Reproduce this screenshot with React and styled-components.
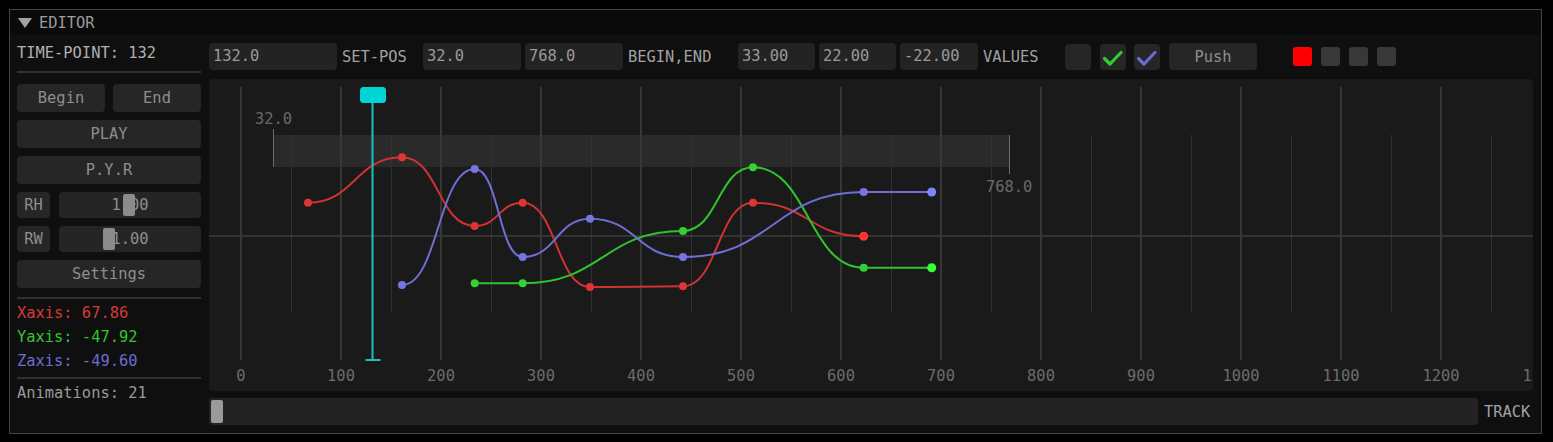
import React from 'react'
import styled, { createGlobalStyle } from 'styled-components'

const GlobalStyle = createGlobalStyle`
  html, body {
    margin: 0;
    padding: 0;
    background: #000;
  }
  body {
    font-family: 'DejaVu Sans Mono', 'Liberation Mono', monospace;
    font-size: 15.4px;
  }
`

const Window = styled.div`
  margin: 9px 0 0 9px;
  width: 1533px;
  height: 425px;
  box-sizing: border-box;
  border: 1px solid #444;
  background: #0f0f0f;
  display: flex;
  flex-direction: column;
`

const TitleBar = styled.div`
  flex: none;
  height: 25px;
  background: #0a0a0a;
  display: flex;
  align-items: center;
  gap: 7px;
  padding-left: 8px;
  color: #9c9c9c;
`

const Arrow = styled.span`
  width: 0;
  height: 0;
  border-left: 7px solid transparent;
  border-right: 7px solid transparent;
  border-top: 10px solid #a2a2a2;
`

const Body = styled.div`
  flex: 1;
  display: flex;
  gap: 8px;
  padding: 0 8px 8px 7px;
`

const LeftPanel = styled.div`
  width: 184px;
  flex: none;
  display: flex;
  flex-direction: column;
  padding-top: 8px;
`

const InfoText = styled.div`
  line-height: ${(p) => p.$lh || 24}px;
  color: ${(p) => p.$color || '#9a9a9a'};
  margin-top: ${(p) => p.$mt || 0}px;
  white-space: nowrap;
`

const Separator = styled.div`
  height: 2px;
  background: #303030;
  margin-top: ${(p) => p.$mt || 0}px;
  margin-bottom: ${(p) => p.$mb || 0}px;
`

const Controls = styled.div`
  display: flex;
  flex-direction: column;
  gap: 8px;
`

const Row = styled.div`
  display: flex;
  gap: ${(p) => p.$gap || 8}px;
  height: ${(p) => p.$h || 28}px;
`

const Button = styled.div`
  flex: ${(p) => (p.$grow ? '1 1 0' : 'none')};
  width: ${(p) => (p.$w ? `${p.$w}px` : 'auto')};
  height: ${(p) => p.$h || 28}px;
  margin-left: ${(p) => p.$ml || 0}px;
  background: #262626;
  border-radius: 4px;
  color: #8e8e8e;
  display: flex;
  align-items: center;
  justify-content: center;
`

const Slider = styled.div`
  position: relative;
  flex: 1;
  background: #252525;
  border-radius: 4px;
  color: #8e8e8e;
  display: flex;
  align-items: center;
  justify-content: center;
`

const Grab = styled.div`
  position: absolute;
  top: 2px;
  bottom: 2px;
  width: 12px;
  background: #8b8b8b;
  border-radius: 2px;
`

const Main = styled.div`
  flex: 1;
  min-width: 0;
  display: flex;
  flex-direction: column;
  padding-top: 8px;
`

const Toolbar = styled.div`
  display: flex;
  align-items: center;
  height: 27px;
`

const Field = styled.div`
  flex: none;
  width: ${(p) => p.$w}px;
  height: 27px;
  margin-left: ${(p) => p.$ml || 0}px;
  box-sizing: border-box;
  padding-left: 4px;
  background: #232323;
  border-radius: 4px;
  color: #9a9a9a;
  line-height: 27px;
`

const Label = styled.div`
  flex: none;
  width: ${(p) => p.$w}px;
  margin-left: ${(p) => p.$ml || 0}px;
  color: #a2a2a2;
  white-space: nowrap;
`

const CheckBox = styled.div`
  flex: none;
  width: 26px;
  height: 26px;
  margin-left: ${(p) => p.$ml || 0}px;
  background: #262626;
  border-radius: 4px;
  display: flex;
`

const Swatch = styled.div`
  flex: none;
  width: 19px;
  height: 19px;
  margin-left: ${(p) => p.$ml || 0}px;
  background: ${(p) => p.$color};
  border-radius: 3px;
`

const Canvas = styled.div`
  margin-top: 9px;
  height: 312px;
  background: #1a1a1a;
  border-radius: 4px;
  overflow: hidden;
`

const ScrollRow = styled.div`
  margin-top: 7px;
  height: 27px;
  display: flex;
  align-items: center;
  gap: 6px;
`

const Track = styled.div`
  flex: none;
  width: 1269px;
  height: 27px;
  box-sizing: border-box;
  padding: 2px;
  background: #232323;
  border-radius: 3px;
`

const Thumb = styled.div`
  width: 12px;
  height: 100%;
  background: #9a9a9a;
  border-radius: 2px;
`

const Check = ({ color }) => (
  <svg width='26' height='26' viewBox='0 0 26 26'>
    <path d='M4.5 14.5 L10 20 L21 8.5' fill='none' stroke={color} strokeWidth='3.2' strokeLinecap='round' strokeLinejoin='round' />
  </svg>
)

const curves = [
  {
    line: '#d03232',
    dot: '#dc3535',
    end: '#ff3535',
    pts: [[99, 123.7], [193, 78.3], [265.7, 147], [313.7, 123.7], [381, 208], [474, 207.3], [544, 123.7], [654.7, 157.3]],
  },
  {
    line: '#2fc42f',
    dot: '#34d034',
    end: '#36ff36',
    pts: [[265.7, 204.3], [313.7, 204.3], [474, 152], [544, 88.3], [654.7, 188.7], [722.7, 188.7]],
  },
  {
    line: '#6e6ed4',
    dot: '#7676e0',
    end: '#8282ff',
    pts: [[193, 206], [265.7, 90], [313.7, 178], [381, 139.7], [474, 178], [654.7, 113], [722.7, 113]],
  },
]

const curvePath = (pts) => {
  let d = `M${pts[0][0]},${pts[0][1]}`
  for (let i = 1; i < pts.length; i++) {
    const [x0, y0] = pts[i - 1]
    const [x1, y1] = pts[i]
    const dx = (x1 - x0) * 0.5
    d += ` C${x0 + dx},${y0} ${x1 - dx},${y1} ${x1},${y1}`
  }
  return d
}

const ticks = Array.from({ length: 14 }, (_, i) => i)

const Timeline = () => (
  <svg width='1324' height='312' style={{ display: 'block' }} fontFamily="'DejaVu Sans Mono', monospace" fontSize='15.4'>
    <rect x='64' y='56' width='736' height='32' fill='#2a2a2a' />
    {ticks.map((i) => (
      <line key={'mj' + i} x1={32 + i * 100} x2={32 + i * 100} y1='8' y2='281' stroke='#373737' strokeWidth='2' />
    ))}
    {ticks.map((i) => (
      <line key={'mn' + i} x1={82.5 + i * 100} x2={82.5 + i * 100} y1='56' y2='233' stroke='#313131' strokeWidth='1' />
    ))}
    <line x1='0' x2='1324' y1='157' y2='157' stroke='#3c3c3c' strokeWidth='1.6' />
    <line x1='64.5' x2='64.5' y1='50' y2='88' stroke='#6c6c6c' strokeWidth='1' />
    <line x1='800.5' x2='800.5' y1='56' y2='95' stroke='#6c6c6c' strokeWidth='1' />
    <text x='46' y='44.6' fill='#6a6a6a'>32.0</text>
    <text x='777' y='112.6' fill='#6a6a6a'>768.0</text>
    {ticks.map((i) => (
      <text key={'lb' + i} x={32 + i * 100} y='301.6' textAnchor='middle' fill='#6c6c6c'>
        {i * 100}
      </text>
    ))}
    {curves.map((c, ci) => (
      <g key={ci}>
        <path d={curvePath(c.pts)} fill='none' stroke={c.line} strokeWidth='2' />
        {c.pts.map(([x, y], pi) => (
          <circle key={pi} cx={x} cy={y} r={pi === c.pts.length - 1 ? 4.5 : 4} fill={pi === c.pts.length - 1 ? c.end : c.dot} />
        ))}
      </g>
    ))}
    <line x1='163.5' x2='163.5' y1='22' y2='281' stroke='#18c2c2' strokeWidth='2' />
    <line x1='156.5' x2='171.5' y1='281' y2='281' stroke='#18c2c2' strokeWidth='2' />
    <rect x='151' y='8' width='26' height='16' rx='3.5' fill='#00d4d4' />
  </svg>
)

export default function App() {
  return (
    <>
      <GlobalStyle />
      <Window>
        <TitleBar>
          <Arrow />
          <span>EDITOR</span>
        </TitleBar>
        <Body>
          <LeftPanel>
            <InfoText $lh={20} $color='#b0b0b0'>TIME-POINT: 132</InfoText>
            <Separator $mt={8} $mb={11} />
            <Controls>
              <Row>
                <Button $grow>Begin</Button>
                <Button $grow>End</Button>
              </Row>
              <Button>PLAY</Button>
              <Button>P.Y.R</Button>
              <Row $gap={9} $h={26}>
                <Button $w={33} $h={26}>RH</Button>
                <Slider>
                  1.00
                  <Grab style={{ left: 64 }} />
                </Slider>
              </Row>
              <Row $gap={9} $h={26}>
                <Button $w={33} $h={26}>RW</Button>
                <Slider>
                  1.00
                  <Grab style={{ left: 44 }} />
                </Slider>
              </Row>
              <Button>Settings</Button>
            </Controls>
            <Separator $mt={9} />
            <InfoText $mt={2} $color='#d63a3a'>Xaxis: 67.86</InfoText>
            <InfoText $color='#33c433'>Yaxis: -47.92</InfoText>
            <InfoText $color='#6c6cd2'>Zaxis: -49.60</InfoText>
            <Separator $mt={4} />
            <InfoText $mt={2}>Animations: 21</InfoText>
          </LeftPanel>
          <Main>
            <Toolbar>
              <Field $w={128}>132.0</Field>
              <Label $w={81} $ml={5}>SET-POS</Label>
              <Field $w={98}>32.0</Field>
              <Field $w={98} $ml={4}>768.0</Field>
              <Label $w={110} $ml={5}>BEGIN,END</Label>
              <Field $w={77}>33.00</Field>
              <Field $w={77} $ml={4}>22.00</Field>
              <Field $w={78} $ml={4}>-22.00</Field>
              <Label $w={82} $ml={5}>VALUES</Label>
              <CheckBox />
              <CheckBox $ml={9}>
                <Check color='#2ecf2e' />
              </CheckBox>
              <CheckBox $ml={8}>
                <Check color='#6b6bd6' />
              </CheckBox>
              <Button $w={88} $h={27} $ml={9}>Push</Button>
              <Swatch $ml={36} $color='#ff0000' />
              <Swatch $ml={9} $color='#383838' />
              <Swatch $ml={9} $color='#383838' />
              <Swatch $ml={9} $color='#383838' />
            </Toolbar>
            <Canvas>
              <Timeline />
            </Canvas>
            <ScrollRow>
              <Track>
                <Thumb />
              </Track>
              <Label $w={60}>TRACK</Label>
            </ScrollRow>
          </Main>
        </Body>
      </Window>
    </>
  )
}
